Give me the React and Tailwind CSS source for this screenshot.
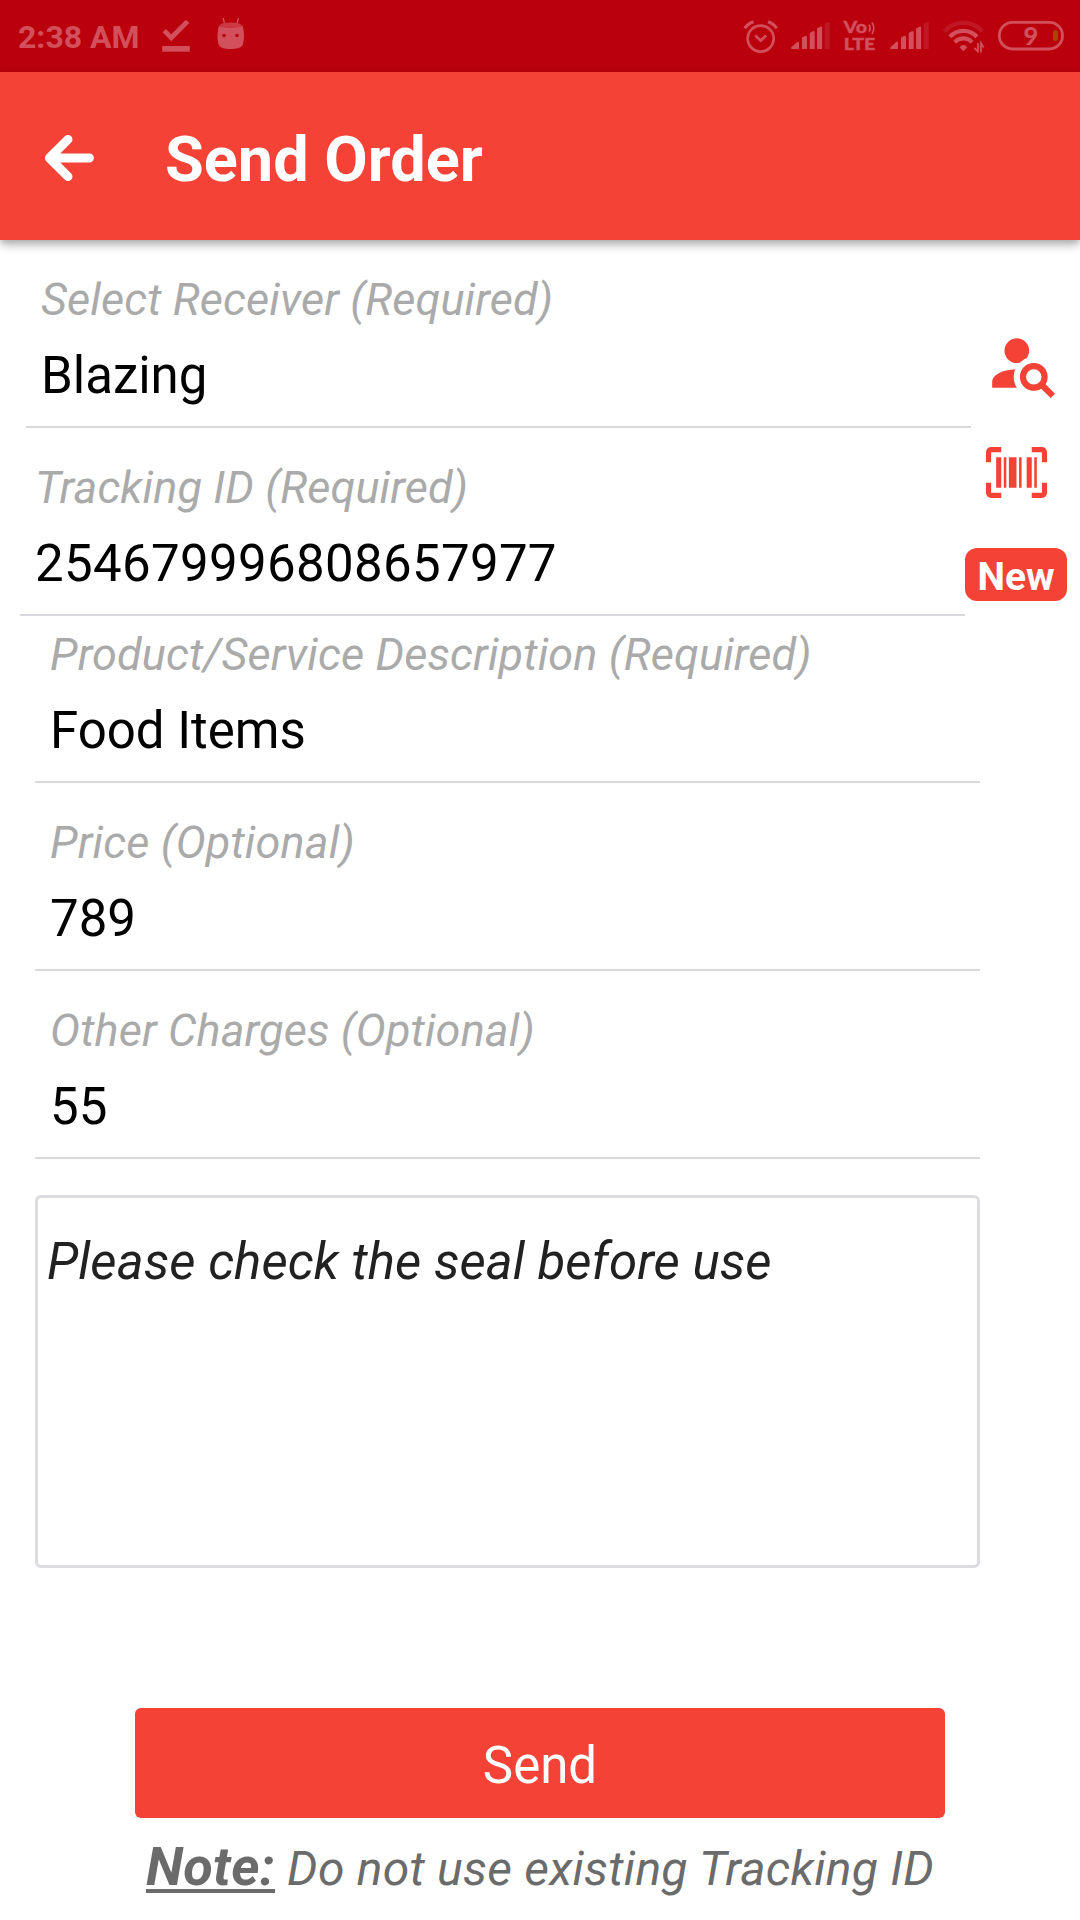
import React from 'react';

const TINT = '#d1505c';
const DIM = '#bf1824';

function SignalBars() {
  return (
    <svg viewBox="790 0 42 72" className="h-[72px] w-[42px] shrink-0">
      <g fill={TINT}>
        <path d="M791.3 49V47.2L797.5 41.8H799V49Z" />
        <path d="M802 49V37.5L805 36H807V49Z" />
        <path d="M809.7 49V33L812.7 31.3H814.7V49Z" />
        <path d="M817.1 49V28.4L820.1 26.7H822.1V49Z" />
      </g>
      <path d="M824.7 49V23.7L827.7 22H829.7V49Z" fill={DIM} />
    </svg>
  );
}

function StatusBar() {
  return (
    <div className="flex h-[72px] w-full items-center bg-[#ba000d]">
      <span className="ml-[18px] w-[144px] whitespace-nowrap pt-[2px] text-[32px] leading-[70px] font-bold text-[#d1505c]">
        2:38 AM
      </span>
      <svg viewBox="162 0 48 72" className="h-[72px] w-[48px]">
        <path d="M164.3 30.6L171.3 37.8L187.6 21.4" fill="none" stroke={TINT} strokeWidth="4.8" />
        <rect x="162.2" y="46" width="27.6" height="5.7" fill={TINT} />
      </svg>
      <svg viewBox="210 0 48 72" className="h-[72px] w-[48px]">
        <path d="M223.2 18L224.6 24M238.4 18L237 24" stroke={TINT} strokeWidth="1.3" />
        <path
          d="M219 25.6C221 28 240.6 28 242.6 25.6C244.4 32 244.3 40 242.9 44.5C241.5 48.2 236 49 230.6 49C225 49 220.2 48.2 218.7 44.5C217 40 217.2 32 219 25.6Z"
          fill={TINT}
        />
        <ellipse cx="230.8" cy="25.2" rx="11" ry="2.8" fill="#cb3743" />
        <circle cx="224" cy="35.5" r="1.8" fill="#ba000d" />
        <circle cx="237" cy="35.5" r="1.8" fill="#ba000d" />
      </svg>

      <div className="ml-auto flex pr-[12px]">
        <svg viewBox="742 0 48 72" className="h-[72px] w-[48px]">
          <g fill="none" stroke={TINT} strokeWidth="2.7">
            <circle cx="760.7" cy="38.6" r="13" />
            <path d="M755.2 35.6L760.7 40.6L766.2 35.6" />
            <path d="M744.8 28.3Q747.5 24 753.4 21.8M768 21.8Q774 24 776.6 28.3" strokeWidth="3.2" />
          </g>
        </svg>
        <SignalBars />
        <svg viewBox="832 0 57.3 72" className="h-[72px] w-[57.3px]">
          <g fill={TINT} stroke={TINT} strokeWidth="0.4" fontFamily="Lato, sans-serif" fontWeight="900">
            <text x="843.6" y="33" fontSize="16.5" textLength="23.5" lengthAdjust="spacingAndGlyphs">Vo</text>
            <text x="843.8" y="50" fontSize="17.5" textLength="31.5" lengthAdjust="spacingAndGlyphs">LTE</text>
          </g>
          <path d="M869 24.8Q871.2 28.3 869 31.8M872 22.5Q875.6 28.2 872 34" fill="none" stroke={TINT} strokeWidth="1.7" />
        </svg>
        <SignalBars />
        <svg viewBox="931.3 0 61.7 72" className="h-[72px] w-[61.7px]">
          <g fill="none" strokeWidth="4.2">
            <path d="M944.7 31.4A25.6 25.6 0 0 1 982.7 31.4" stroke={DIM} />
            <path d="M950.2 36.8A18.2 18.2 0 0 1 977.2 36.8" stroke={TINT} />
            <path d="M955.2 42.3A11.2 11.2 0 0 1 972.2 42.3" stroke={TINT} />
          </g>
          <path d="M959.8 47Q963.7 43 967.6 47L964.6 50.4Q963.7 51 962.8 50.4Z" fill={TINT} />
          <path d="M974.6 48L978.3 51.4M978.3 43V52.6M981.2 52.4V43.2L984 47.4" fill="none" stroke={TINT} strokeWidth="1.8" />
        </svg>
        <svg viewBox="993 0 75 72" className="h-[72px] w-[75px]">
          <rect x="999.3" y="22.4" width="63.2" height="26.6" rx="13.3" fill="none" stroke={TINT} strokeWidth="2.8" />
          <text x="1023.6" y="45" fontSize="25.5" fontFamily="Lato, sans-serif" fontWeight="900" fill={TINT}>9</text>
          <rect x="1053" y="30" width="5" height="11" rx="2.5" fill="#9c4b0d" />
        </svg>
      </div>
    </div>
  );
}

function Header() {
  return (
    <header className="flex h-[168px] w-full items-center bg-[#f44336] shadow-[0_4px_9px_rgba(0,0,0,0.36)]">
      <svg viewBox="0 0 50 48" className="mt-[4px] ml-[44px] h-[48px] w-[50px]">
        <path
          d="M24 5.4L5.4 24L24 42.6M5.4 24H45.4"
          fill="none"
          stroke="#fff"
          strokeWidth="9"
          strokeLinecap="round"
          strokeLinejoin="round"
        />
      </svg>
      <h1 className="ml-[71px] pt-[8px] text-[63px] leading-[80px] font-bold text-white">Send Order</h1>
    </header>
  );
}

function Field({ label, value, className = '' }) {
  return (
    <div className={`w-[945px] border-b-2 border-[#d9d8de] pb-[20px] pl-[15px] ${className}`}>
      <div className="text-[45px] leading-[60px] tracking-[0.11px] whitespace-nowrap text-[#aaaaaa] italic">{label}</div>
      <div className="mt-4 text-[51px] leading-[60px] whitespace-nowrap text-black">{value}</div>
    </div>
  );
}

export default function App() {
  return (
    <div className="flex h-[1920px] w-[1080px] flex-col overflow-hidden bg-white font-[Roboto,sans-serif]">
      <div className="relative z-10">
        <StatusBar />
        <Header />
      </div>

      <div className="flex">
        <div className="w-[965px] shrink-0">
          <Field label="Select Receiver (Required)" value="Blazing" className="ml-[26px] pt-[30px]" />
          <Field
            label="Tracking ID (Required)"
            value={<span className="tracking-[0.33px]">254679996808657977</span>}
            className="ml-[20px] pt-[30px]"
          />
        </div>
        <div className="flex w-[115px] flex-col">
          <svg viewBox="0 0 24 24" className="mt-[86px] ml-[21px] size-[74px]" fill="#f44336">
            <path d="M15.5,12C18,12 20,14 20,16.5C20,17.38 19.75,18.21 19.31,18.9L22.39,22L21,23.39L17.88,20.32C17.19,20.75 16.37,21 15.5,21C13,21 11,19 11,16.5C11,14 13,12 15.5,12M15.5,14A2.5,2.5 0 0,0 13,16.5A2.5,2.5 0 0,0 15.5,19A2.5,2.5 0 0,0 18,16.5A2.5,2.5 0 0,0 15.5,14M10,4A4,4 0 0,1 14,8C14,8.91 13.69,9.75 13.18,10.43C12.32,10.75 11.55,11.26 10.91,11.9L10,12A4,4 0 0,1 6,8A4,4 0 0,1 10,4M2,20V18C2,15.88 5.31,14.14 9.5,14C9.18,14.78 9,15.62 9,16.5C9,17.79 9.38,19 10,20H2Z" />
          </svg>
          <svg viewBox="0 0 24 24" className="mt-[42px] ml-[21px] size-[61px]" fill="#f44336">
            <path d="M4,6H6V18H4V6M7,6H8V18H7V6M9,6H12V18H9V6M13,6H14V18H13V6M16,6H18V18H16V6M19,6H20V18H19V6M2,4V8H0V4A2,2 0 0,1 2,2H6V4H2M22,2A2,2 0 0,1 24,4V8H22V4H18V2H22M2,16V20H6V22H2A2,2 0 0,1 0,20V16H2M22,20V16H24V20A2,2 0 0,1 22,22H18V20H22Z" />
          </svg>
          <button className="mt-[45px] h-[53px] w-[102px] rounded-xl bg-[#f44336] pt-[5px] text-center text-[39px] leading-[48px] font-bold text-white">
            New
          </button>
        </div>
      </div>

      <div className="ml-[35px] flex flex-col">
        <Field label="Product/Service Description (Required)" value="Food Items" className="pt-[9px]" />
        <Field label="Price (Optional)" value="789" className="pt-[30px]" />
        <Field label="Other Charges (Optional)" value="55" className="pt-[30px]" />
        <div className="mt-[36px] h-[373px] w-[945px] rounded-[6px] border-3 border-[#dbdbe0] pt-[34px] pl-[9px] text-[51px] leading-[60px] tracking-[0.07px] text-[#212121] italic">
          Please check the seal before use
        </div>
      </div>

      <button className="mt-[140px] h-[110px] w-[810px] self-center rounded-[6px] bg-[#f44336] pt-[5px] text-[51px] leading-[105px] text-white">
        Send
      </button>
      <p className="mt-[19px] text-center text-[48px] leading-[60px] whitespace-nowrap text-[#6b6b6b] italic">
        <span className="text-[54px] leading-[60px] font-bold tracking-[0.3px] underline decoration-4 underline-offset-[4px] [text-decoration-skip-ink:none]">
          Note:
        </span>
        <span className="tracking-[0.25px]"> Do not use existing Tracking ID</span>
      </p>
    </div>
  );
}
